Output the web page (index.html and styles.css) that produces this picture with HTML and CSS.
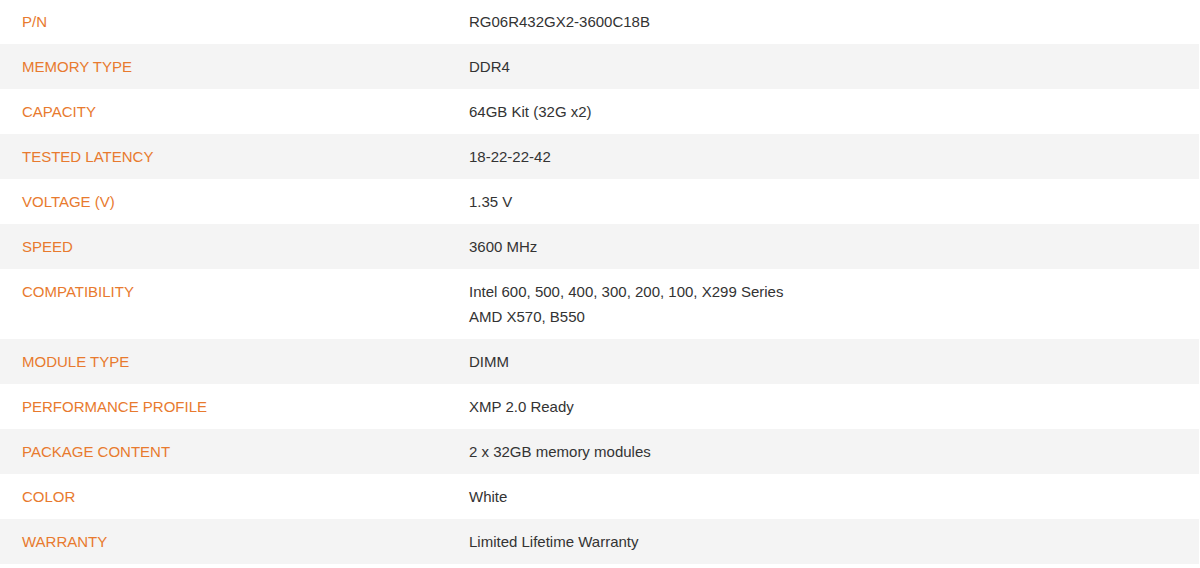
FILE: index.html
```html
<!DOCTYPE html>
<html>
<head>
<meta charset="utf-8">
<link rel="stylesheet" href="styles.css">
</head>
<body>
<div class="specs">
  <div class="row"><div class="label">P/N</div><div class="value">RG06R432GX2-3600C18B</div></div>
  <div class="row"><div class="label">MEMORY TYPE</div><div class="value">DDR4</div></div>
  <div class="row"><div class="label">CAPACITY</div><div class="value">64GB Kit (32G x2)</div></div>
  <div class="row"><div class="label">TESTED LATENCY</div><div class="value">18-22-22-42</div></div>
  <div class="row"><div class="label">VOLTAGE (V)</div><div class="value">1.35 V</div></div>
  <div class="row"><div class="label">SPEED</div><div class="value">3600 MHz</div></div>
  <div class="row"><div class="label">COMPATIBILITY</div><div class="value">Intel 600, 500, 400, 300, 200, 100, X299 Series<br>AMD X570, B550</div></div>
  <div class="row"><div class="label">MODULE TYPE</div><div class="value">DIMM</div></div>
  <div class="row"><div class="label">PERFORMANCE PROFILE</div><div class="value">XMP 2.0 Ready</div></div>
  <div class="row"><div class="label">PACKAGE CONTENT</div><div class="value">2 x 32GB memory modules</div></div>
  <div class="row"><div class="label">COLOR</div><div class="value">White</div></div>
  <div class="row"><div class="label">WARRANTY</div><div class="value">Limited Lifetime Warranty</div></div>
</div>
</body>
</html>
```
FILE: styles.css
```css
html, body {
  margin: 0;
  padding: 0;
  background: #ffffff;
}
body {
  font-family: "Liberation Sans", Arial, sans-serif;
  font-size: 15px;
  line-height: 25px;
  color: #333333;
}
.specs {
  width: 1199px;
  margin-top: -1px;
  display: flex;
  flex-direction: column;
}
.row {
  display: grid;
  grid-template-columns: 447px 1fr;
  background: #ffffff;
}
.row:nth-child(even) {
  background: #f4f4f4;
}
.label, .value {
  padding: 10px 22px;
}
.label {
  color: #e87a2e;
}
.value {
  color: #333333;
}
```
